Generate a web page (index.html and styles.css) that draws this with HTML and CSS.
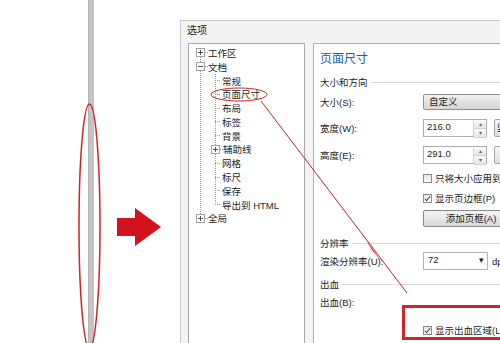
FILE: index.html
```html
<!DOCTYPE html>
<html lang="zh-CN">
  <head>
    <meta charset="utf-8">
    <link rel="stylesheet" href="styles.css">
  </head>
  <body>
    <div class="stage">
      <div class="side">
        <div class="rail"></div>
        <svg class="pointer" width="44" height="38" viewBox="0 0 44 38">
          <rect x="0" y="10" width="19" height="18" fill="#d2121c"/>
          <polygon points="18,0 44,19 18,38" fill="#d2121c"/>
        </svg>
      </div>

      <div class="dialog">
        <div class="dialog-title">选项</div>
        <div class="dialog-body">
          <div class="tree">
            <ul class="root">
              <li class="node"><span class="box plus"></span><span class="tick"></span>工作区</li>
              <li>
                <div class="node"><span class="box"></span><span class="tick"></span>文档</div>
                <ul class="sub">
                  <li class="leaf"><span class="tick"></span>常规</li>
                  <li class="leaf"><span class="tick"></span>页面尺寸</li>
                  <li class="leaf"><span class="tick"></span>布局</li>
                  <li class="leaf"><span class="tick"></span>标签</li>
                  <li class="leaf"><span class="tick"></span>背景</li>
                  <li class="branch"><span class="box plus"></span><span class="tick short"></span>辅助线</li>
                  <li class="leaf"><span class="tick"></span>网格</li>
                  <li class="leaf"><span class="tick"></span>标尺</li>
                  <li class="leaf"><span class="tick"></span>保存</li>
                  <li class="leaf"><span class="tick"></span>导出到 HTML</li>
                </ul>
              </li>
              <li class="node"><span class="box plus"></span><span class="tick"></span>全局</li>
            </ul>
          </div>

          <div class="page">
            <div class="page-title">页面尺寸</div>

            <div class="group g-size">大小和方向</div>
            <div class="row r-size">
              <span class="label">大小(S):</span>
              <span class="combo">自定义</span>
            </div>
            <div class="row r-width">
              <span class="label">宽度(W):</span>
              <span class="spin"><span class="spin-value">216.0</span><span class="spin-btns"><i>▴</i><i>▾</i></span></span>
              <span class="orient">竖</span>
            </div>
            <div class="row r-height">
              <span class="label">高度(E):</span>
              <span class="spin"><span class="spin-value">291.0</span><span class="spin-btns"><i>▴</i><i>▾</i></span></span>
              <span class="orient"></span>
            </div>
            <div class="row r-check1">
              <span class="label"></span>
              <span class="check"></span>只将大小应用到
            </div>
            <div class="row r-check2">
              <span class="label"></span>
              <span class="check on"></span>显示页边框(P)
            </div>
            <div class="row r-button">
              <span class="label"></span>
              <span class="button">添加页框(A)</span>
            </div>

            <div class="group g-res">分辨率</div>
            <div class="row r-res">
              <span class="label">渲染分辨率(U):</span>
              <span class="drop"><span>72</span><span class="caret">▾</span></span>
              <span class="unit">dpi</span>
            </div>

            <div class="group g-bleed">出血</div>
            <div class="row r-bleed">
              <span class="label">出血(B):</span>
            </div>
            <div class="row r-check3">
              <span class="label"></span>
              <span class="check on"></span>显示出血区域(L)
            </div>
          </div>
        </div>
      </div>

      <svg class="marks" width="500" height="343" viewBox="0 0 500 343">
        <ellipse cx="89.5" cy="226" rx="10.5" ry="122" fill="none" stroke="#d3202a" stroke-width="1.5"/>
        <ellipse cx="239" cy="94.5" rx="28" ry="6.5" fill="none" stroke="#d3202a" stroke-width="1"/>
        <line x1="261" y1="101" x2="407" y2="293" stroke="#c8202a" stroke-width="1"/>
        <polygon points="366,240 382,262 372,250" fill="#c8202a"/>
        <rect x="403.5" y="306.5" width="120" height="32" fill="none" stroke="#d3222a" stroke-width="3"/>
      </svg>
    </div>
  </body>
</html>
```

FILE: styles.css
```css
body {
  margin: 0;
  background: #fff;
  font-family: "Liberation Sans", "Noto Sans CJK SC", sans-serif;
  font-size: 9.5px;
  color: #1c1c1c;
}

.stage {
  position: relative;
  display: flex;
  width: 500px;
  height: 343px;
  overflow: hidden;
}

.side {
  display: flex;
  flex-shrink: 0;
  width: 180px;
}

.rail {
  width: 5px;
  margin-left: 88px;
  background: #c4c4c4;
  border-left: 1px solid #b4b4b4;
}

.pointer {
  margin-left: 23px;
  margin-top: 208px;
}

.dialog {
  flex-shrink: 0;
  width: 360px;
  height: 340px;
  margin-top: 20px;
  border: 1px solid #cacaca;
  background: #f3f3f3;
}

.dialog-title {
  height: 22px;
  padding-left: 6px;
  line-height: 19px;
  font-size: 10px;
}

.dialog-body {
  display: flex;
  gap: 8px;
  padding-left: 7px;
}

/* tree */

.tree {
  flex-shrink: 0;
  width: 115px;
  height: 320px;
  border: 1px solid #a8a8a8;
  background: #fff;
}

.tree ul {
  position: relative;
  margin: 0;
  padding: 0;
  list-style: none;
}

.root {
  padding-top: 2px !important;
}

.root::before {
  content: "";
  position: absolute;
  left: 11px;
  top: 9px;
  bottom: 7px;
  border-left: 1px dotted #9a9a9a;
}

.sub::before {
  content: "";
  position: absolute;
  left: 26px;
  top: 0;
  bottom: 7px;
  border-left: 1px dotted #9a9a9a;
}

.node, .leaf, .branch {
  display: flex;
  align-items: center;
  height: 13.8px;
  white-space: nowrap;
}

.node {
  padding-left: 7px;
}

.leaf {
  padding-left: 26px;
}

.branch {
  padding-left: 22px;
}

.tick {
  width: 3px;
  border-top: 1px dotted #9a9a9a;
}

.leaf .tick {
  width: 5px;
  margin-right: 2px;
}

.box {
  position: relative;
  z-index: 1;
  width: 7px;
  height: 7px;
  border: 1px solid #a4a4a4;
  background: #fff;
}

.box::before {
  content: "";
  position: absolute;
  left: 1px;
  top: 3px;
  width: 5px;
  height: 1px;
  background: #555;
}

.plus::after {
  content: "";
  position: absolute;
  left: 3px;
  top: 1px;
  width: 1px;
  height: 5px;
  background: #555;
}

/* page */

.page {
  flex-shrink: 0;
  width: 300px;
  height: 320px;
  padding-left: 6px;
  border: 1px solid #b0b0b0;
  background: #fff;
}

.page-title {
  height: 20px;
  margin-top: 5px;
  line-height: 20px;
  font-size: 12px;
  color: #1e5ea9;
}

.group {
  display: flex;
  align-items: center;
  height: 16px;
}

.group::after {
  content: "";
  flex: 1;
  margin-left: 3px;
  border-top: 1px solid #dadada;
}

.g-size { margin-top: 5px; }
.g-res { margin-top: 8px; }
.g-bleed { margin-top: 6px; }

.row {
  display: flex;
  align-items: center;
  white-space: nowrap;
}

.r-size { height: 16px; margin-top: 4px; }
.r-width { height: 18px; margin-top: 9px; }
.r-height { height: 18px; margin-top: 9px; }
.r-check1 { height: 14px; margin-top: 7px; }
.r-check2 { height: 14px; margin-top: 6px; }
.r-button { height: 17px; margin-top: 5px; }
.r-res { height: 18px; margin-top: 1px; }
.r-bleed { height: 16px; margin-top: 2px; }
.r-check3 { height: 14px; margin-top: 13px; }

.label {
  flex-shrink: 0;
  width: 103px;
}

.combo {
  flex-shrink: 0;
  box-sizing: border-box;
  width: 140px;
  height: 16px;
  padding-left: 5px;
  line-height: 14px;
  border: 1px solid #8f8f8f;
  border-radius: 2px;
  background: linear-gradient(#f2f2f2, #e2e2e2 50%, #d6d6d6);
}

.spin {
  flex-shrink: 0;
  box-sizing: border-box;
  display: flex;
  width: 64px;
  height: 18px;
  border: 1px solid #adadad;
  background: #fff;
}

.spin-value {
  flex: 1;
  padding-left: 3px;
  line-height: 13px;
}

.spin-btns {
  display: flex;
  flex-direction: column;
  width: 12px;
  border-left: 1px solid #d6d6d6;
}

.spin-btns i {
  flex: 1;
  font-style: normal;
  font-size: 6px;
  line-height: 8px;
  text-align: center;
  color: #666;
  background: linear-gradient(#fafafa, #e6e6e6);
  border-bottom: 1px solid #d0d0d0;
}

.orient {
  flex-shrink: 0;
  box-sizing: border-box;
  width: 20px;
  height: 18px;
  margin-left: 7px;
  padding-left: 2px;
  line-height: 16px;
  border: 1px solid #a4a4a4;
  border-radius: 2px;
  background: linear-gradient(#f6f6f6, #e0e0e0);
}

.check {
  position: relative;
  flex-shrink: 0;
  box-sizing: border-box;
  width: 9px;
  height: 9px;
  margin-right: 3px;
  border: 1px solid #8c8c8c;
  background: linear-gradient(#e8e8e8, #fafafa);
}

.check.on::after {
  content: "";
  position: absolute;
  left: 2px;
  top: 0;
  width: 2px;
  height: 5px;
  border: solid #3a4a78;
  border-width: 0 1.5px 1.5px 0;
  transform: rotate(40deg);
}

.button {
  flex-shrink: 0;
  box-sizing: border-box;
  width: 96px;
  height: 17px;
  line-height: 15px;
  text-align: center;
  border: 1px solid #8a8a8a;
  border-radius: 2px;
  background: linear-gradient(#f4f4f4, #e6e6e6 50%, #d8d8d8);
}

.drop {
  flex-shrink: 0;
  box-sizing: border-box;
  display: flex;
  justify-content: space-between;
  width: 65px;
  height: 18px;
  padding: 0 3px 0 4px;
  line-height: 14px;
  border: 1px solid #b4b4b4;
  background: #fff;
}

.caret {
  font-size: 9px;
  color: #222;
}

.unit {
  margin-left: 4px;
}

.marks {
  position: absolute;
  top: 0;
  left: 0;
  pointer-events: none;
}
```
